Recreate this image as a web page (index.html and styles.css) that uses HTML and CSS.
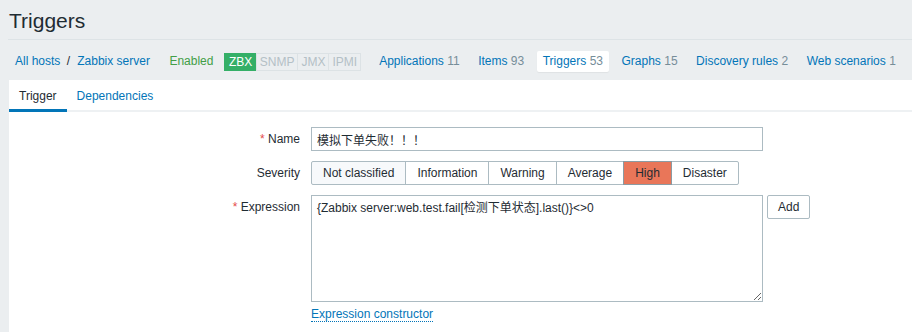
FILE: index.html
```html
<!DOCTYPE html>
<html>
<head>
<meta charset="utf-8">
<title>Triggers</title>
<link rel="stylesheet" href="styles.css">
</head>
<body>
<header class="header">
  <h1 class="title">Triggers</h1>
</header>
<nav class="nav">
  <div class="crumbs">
    <a class="link" href="#">All hosts</a><span class="sep">/</span><a class="link" href="#">Zabbix server</a>
  </div>
  <span class="enabled">Enabled</span>
  <div class="tags">
    <span class="tag tag-on">ZBX</span><span class="tag">SNMP</span><span class="tag">JMX</span><span class="tag">IPMI</span>
  </div>
  <ul class="objects">
    <li class="obj"><a class="link" href="#">Applications</a> <span class="count">11</span></li>
    <li class="obj"><a class="link" href="#">Items</a> <span class="count">93</span></li>
    <li class="obj obj-active"><a class="link" href="#">Triggers</a> <span class="count">53</span></li>
    <li class="obj"><a class="link" href="#">Graphs</a> <span class="count">15</span></li>
    <li class="obj"><a class="link" href="#">Discovery rules</a> <span class="count">2</span></li>
    <li class="obj"><a class="link" href="#">Web scenarios</a> <span class="count">1</span></li>
  </ul>
</nav>
<main class="panel">
  <ul class="tabs">
    <li class="tab tab-active">Trigger</li>
    <li class="tab"><a class="link" href="#">Dependencies</a></li>
  </ul>
  <form class="form">
    <label class="label"><span class="req">*</span> Name</label>
    <div class="field">
      <input class="input" type="text" value="模拟下单失败！！！">
    </div>

    <label class="label">Severity</label>
    <div class="field">
      <div class="segmented">
        <span class="seg seg-first">Not classified</span><span class="seg">Information</span><span class="seg">Warning</span><span class="seg">Average</span><span class="seg seg-high">High</span><span class="seg seg-last">Disaster</span>
      </div>
    </div>

    <label class="label"><span class="req">*</span> Expression</label>
    <div class="field">
      <div class="expr-row">
        <textarea class="textarea">{Zabbix server:web.test.fail[检测下单状态].last()}&lt;&gt;0</textarea>
        <button class="btn" type="button">Add</button>
      </div>
      <a class="constructor" href="#">Expression constructor</a>
    </div>
  </form>
</main>
</body>
</html>
```
FILE: styles.css
```css
* { box-sizing: border-box; }
html, body { margin: 0; padding: 0; }
body {
  background: #ebeef0;
  color: #1f2c33;
  font: 12px/14px "Liberation Sans", Arial, "Noto Sans CJK SC", sans-serif;
  height: 332px;
  overflow: hidden;
}
.link { color: #0275b8; text-decoration: none; }

.header {
  margin-left: 8px;
  padding: 9px 0 6px 1px;
  border-bottom: 1px solid #dde3e6;
}
.title {
  margin: 0;
  font-size: 21px;
  line-height: 24px;
  font-weight: normal;
  color: #1f2c33;
}

.nav {
  display: flex;
  align-items: center;
  padding: 11px 0 8px 15px;
  height: 40px;
  white-space: nowrap;
}
.crumbs { display: flex; align-items: center; line-height: 21px; }
.sep { margin: 0 7px 0 6.5px; color: #1f2c33; }
.enabled { margin-left: 19.5px; color: #429e47; line-height: 21px; }
.tags { display: flex; margin-left: 11px; }
.tag {
  height: 18px;
  line-height: 16px;
  padding: 0 3px;
  border: 1px solid #dce2e5;
  color: #b4c0c6;
  margin-left: -1px;
}
.tag-on {
  margin-left: 0;
  background: #34af67;
  border-color: #34af67;
  color: #fff;
  padding: 0 3.5px;
}
.objects {
  display: flex;
  gap: 6.5px;
  list-style: none;
  margin: 0 0 0 12px;
  padding: 0;
}
.obj {
  height: 21px;
  line-height: 21px;
  padding: 0 6px;
  border-radius: 2px;
}
.obj-active {
  background: #fff;
  box-shadow: 0 1px 1px rgba(0, 0, 0, 0.05);
}
.count { color: #768d99; }

.panel {
  margin-left: 9px;
  background: #fff;
  height: 252px;
}
.tabs {
  display: flex;
  list-style: none;
  margin: 0;
  padding: 0;
  height: 32px;
  border-bottom: 2px solid #eef1f3;
}
.tab {
  padding: 9px 10px 6px;
  line-height: 14px;
  height: 32px;
  border-bottom: 3px solid transparent;
}
.tab-active { border-bottom-color: #0275b8; color: #1f2c33; }

.form {
  display: grid;
  grid-template-columns: 291px 1fr;
  column-gap: 11px;
  row-gap: 10px;
  padding-top: 15px;
}
.label {
  text-align: right;
  padding-top: 5px;
  line-height: 14px;
}
.req { color: #e54b4b; }
.field { min-width: 0; }
.input {
  display: block;
  width: 452px;
  height: 24px;
  border: 1px solid #acbbc2;
  padding: 0 5px;
  font: 12px "Liberation Sans", Arial, "Noto Sans CJK SC", sans-serif;
  color: #1f2c33;
  border-radius: 0;
  outline: none;
}
.segmented { display: flex; }
.seg {
  height: 24px;
  line-height: 22px;
  padding: 0 11px;
  border: 1px solid #acbbc2;
  margin-left: -1px;
  background: #fff;
  color: #1f2c33;
}
.seg-first { margin-left: 0; border-radius: 2px 0 0 2px; background: #f7f9fb; }
.seg-last { border-radius: 0 2px 2px 0; }
.seg-high { background: #e97659; border-color: #8b9ba3; position: relative; }

.expr-row { display: flex; align-items: flex-start; }
.textarea {
  display: block;
  width: 452px;
  height: 107px;
  border: 1px solid #acbbc2;
  padding: 5px 5px;
  font: 12px/14px "Liberation Sans", Arial, "Noto Sans CJK SC", sans-serif;
  color: #1f2c33;
  border-radius: 0;
  outline: none;
  margin: 0;
  resize: both;
}
.btn {
  margin-left: 4px;
  height: 24px;
  padding: 0 10px;
  border: 1px solid #acbbc2;
  border-radius: 2px;
  background: #fff;
  color: #1f2c33;
  font: 12px "Liberation Sans", Arial, sans-serif;
}
.constructor {
  display: inline-block;
  margin-top: 5px;
  line-height: 14px;
  color: #0275b8;
  text-decoration: none;
  border-bottom: 1px dotted #0275b8;
}
```
